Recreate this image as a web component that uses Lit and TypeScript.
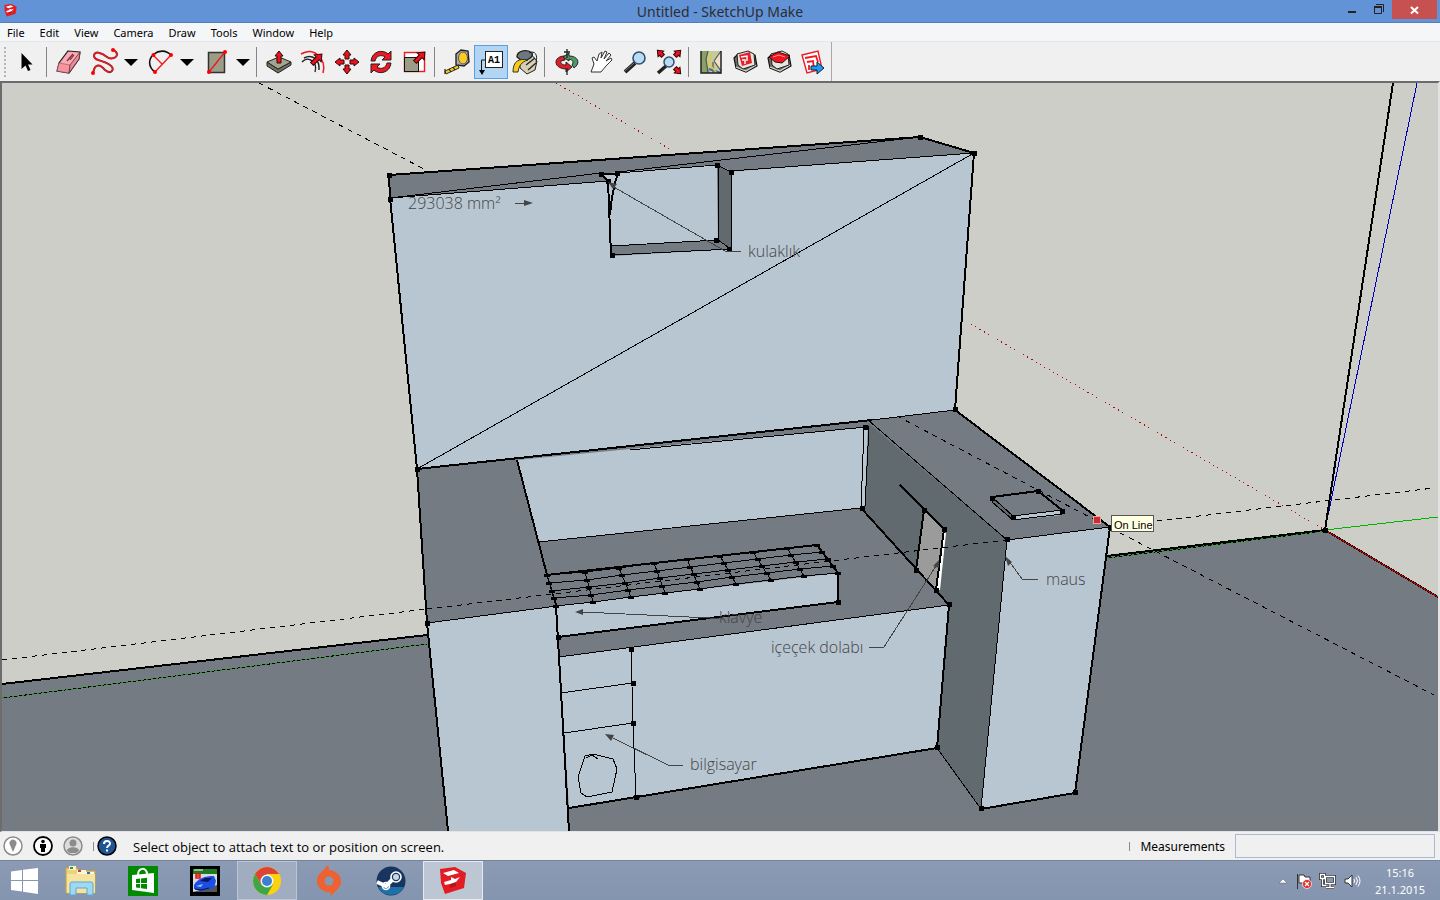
import { LitElement, html, svg, css } from "lit";
import { customElement, state } from "lit/decorators.js";

const menus = ["File", "Edit", "View", "Camera", "Draw", "Tools", "Window", "Help"];

const FACE = "#b8c6d2";
const TOP = "#747b82";
const SIDE = "#616a6f";

/* ---- toolbar glyphs, each on a 34 x 34 grid ---- */
const redArrow = (angle: number, x: number, y: number, len = 11, half = 5) => svg`
  <path transform="translate(${x} ${y}) rotate(${angle})" d="M0 ${-len}L${half} ${-len + half + 1}H2V0H-2V${-len + half + 1}H${-half}Z"
    fill="#f0101c" stroke="#2a0a0a" stroke-width="1"/>`;

const sheet = svg`
  <path d="M6 13L10 9L27 10L29 21L18 27L8 23Z" fill="#6d6e67" stroke="#111" stroke-width="1.200"/>
  <path d="M8 22L18 26L28 20" fill="none" stroke="#d8d8ce" stroke-width="1.200"/>
  <path d="M9 9L20 6L26 9L27 20L15 24L10 20Z" fill="#e8e6dc" stroke="#222"/>`;

const glyphs: Record<string, unknown> = {
  Select: svg`<path d="M11.500 8V24L15.500 20.500L18 26L20.500 25L18 19.500H22.500Z" fill="#000"/>`,
  Eraser: svg`
    <path d="M16 6L28 7L27 14L17 28L5 26L7 18Z" fill="#fbaab4" stroke="#222" stroke-width="1.200"/>
    <path d="M7 18L18 20L17 28L5 26Z" fill="#f9939f" stroke="#8a5560" stroke-width=".6"/>
    <path d="M18 20L28 7L27 14L17 28Z" fill="#e88c98" stroke="#633" stroke-width=".8"/>
    <path d="M15 16L21 9M18 15L22 10" stroke="#7a2b3c" stroke-width="1.200"/>`,
  Freehand: svg`
    <path d="M7 28C9 18 14 19 19 25C25 30 30 24 24 20C18 15 8 16 8 11C8 5 16 8 21 12C26 16 36 11 28 5" fill="none" stroke="#5a2a2c" stroke-width="2"/>
    <path d="M7 28C9 18 14 19 19 25C25 30 30 24 24 20C18 15 8 16 8 11C8 5 16 8 21 12C26 16 36 11 28 5" fill="none" stroke="#f01822" stroke-width="1.400"/>
    <circle cx="7" cy="28" r="2" fill="#f00"/><circle cx="27" cy="5" r="2" fill="#f00"/>`,
  Arc: svg`
    <path d="M13 27C6 22 6 14 12 9C17 5 24 5 29 10" fill="none" stroke="#111" stroke-width="1.600"/>
    <path d="M11 10L20 19M29 10L13 27" stroke="#f01822" stroke-width="1.400"/>
    <circle cx="11.500" cy="10" r="2" fill="#f00"/><circle cx="29" cy="10" r="2" fill="#f00"/><circle cx="13" cy="27" r="2" fill="#f00"/>`,
  Rectangle: svg`
    <rect x="10.500" y="7.500" width="16" height="20" fill="#9c9d87" stroke="#333" stroke-width="1.500"/>
    <path d="M11 27L27 7" stroke="#f01822" stroke-width="1.400"/>
    <circle cx="11" cy="27" r="2" fill="#f00"/><circle cx="27" cy="7" r="2" fill="#f00"/>`,
  "Push/Pull": svg`
    <path d="M5 17L16 24L29 17V20L16 28L5 21Z" fill="#6f705f" stroke="#222"/>
    <path d="M5 17L17 12L29 17L16 24Z" fill="#a5a58e" stroke="#222"/>
    ${redArrow(0, 17, 18, 12, 4)}`,
  Offset: svg`
    <path d="M5 9C18 1 31 14 27 28" fill="none" stroke="#f01822" stroke-width="1.600"/>
    <path d="M6 17C12 10 22 17 19 27M8 13C16 9 24 14 23 25" fill="none" stroke="#222" stroke-width="1.400"/>
    ${redArrow(45, 16, 19, 14)}`,
  Move: svg`${redArrow(0, 17, 14, 9, 4)}${redArrow(90, 20, 17, 9, 4)}${redArrow(180, 17, 20, 9, 4)}${redArrow(270, 14, 17, 9, 4)}`,
  Rotate: svg`
    <path d="M7 16C8 6 19 4 24 9L27 6V15H18L21 12C17 9 12 11 11 16Z" fill="#ee1722" stroke="#222"/>
    <path d="M27 18C26 28 15 30 10 25L7 28V19H16L13 22C17 25 22 23 23 18Z" fill="#ee1722" stroke="#222"/>`,
  Scale: svg`
    <rect x="6.500" y="7.500" width="20" height="19" fill="#fff" stroke="#f01822" stroke-width="1.400"/>
    <rect x="6.500" y="12.500" width="14" height="14" fill="#9c9d87" stroke="#111"/>
    ${redArrow(45, 17, 17, 14)}`,
  "Tape Measure": svg`
    <path d="M5 26L18 20L19 23L6 29Z" fill="#f6c720" stroke="#332"/>
    <path d="M16 9L21 5L28 6L29 17L24 21L16 20Z" fill="#a9aab0" stroke="#222" stroke-width="1.400"/>
    <ellipse cx="23" cy="13" rx="4.500" ry="6" fill="#f8cb27" stroke="#654"/>
    <path d="M5 24V29M9 24L11 27M13 22L15 25" stroke="#222" stroke-width="1.200"/>`,
  Text: svg`
    <rect x="11.500" y="6.500" width="17" height="16" fill="#fff" stroke="#222"/>
    <text class="glyph-text" x="14" y="18">A1</text>
    <path d="M11 15H7.500V27" fill="none" stroke="#111"/><path d="M5 25H11L8 30Z" fill="#000"/>`,
  "Paint Bucket": svg`
    <path d="M12 13L21 7L29 16L27 25L19 29L12 23Z" fill="#d7cfb2" stroke="#222"/>
    <path d="M9 12C9 5 20 4 24 8C26 12 18 17 13 15Z" fill="#6c7780" stroke="#222" stroke-width="1.400"/>
    <path d="M5 27C5 16 11 13 20 15C13 17 11 21 10 27Z" fill="#f8c81c" stroke="#332"/>
    <path d="M21 8C27 5 30 10 28 17" fill="none" stroke="#222"/>
    <path d="M18 20L27 13M20 25L28 18" stroke="#222" stroke-width="1.300"/>`,
  Orbit: svg`
    <path d="M15 11C9 11 6 14 6 17C6 22 12 24 16 24V27L22 22L16 17V20C12 20 10 18 11 16L15 15Z" fill="#df1c28" stroke="#222"/>
    <path d="M19 11V8L13 12L19 16V14C23 15 24 17 22 20L24 23C31 18 28 11 19 11Z" fill="#4d9a62" stroke="#222"/>
    <path d="M17 4V13M17 23V30M14 7H20" stroke="#222" stroke-width="1.300"/>`,
  Pan: svg`<path d="M7 27L10 19L8 13L10 12L13 16L15 9L18 7L17 13L21 6L23 7L20 14L25 8L27 10L22 16L27 13L28 15L22 21L17 27Z" fill="#fff" stroke="#333"/>`,
  Zoom: svg`
    <path d="M7 27L17 18" stroke="#222" stroke-width="4"/><path d="M7 26L16 18" stroke="#777" stroke-width="1"/>
    <circle cx="21" cy="13" r="6" fill="#b9dcf5" stroke="#344d70" stroke-width="1.600"/>`,
  "Zoom Extents": svg`
    <path d="M6 28L14 21" stroke="#222" stroke-width="3.500"/>
    <circle cx="17" cy="17" r="5" fill="#b9dcf5" stroke="#344d70" stroke-width="1.500"/>
    ${redArrow(-45, 11, 11, 8, 4)}${redArrow(45, 23, 11, 8, 4)}${redArrow(135, 23, 23, 8, 4)}`,
  "Add Location": svg`
    <rect x="7" y="6" width="20" height="22" fill="#c3cba2"/>
    <path d="M7 6H14L12 17L16 28H7Z" fill="#8ba067"/><path d="M20 16L27 6V25Z" fill="#efdfd0"/>
    <path d="M14 6L12 14L14 28M19 17V28M20 16L27 26M20 16L27 6" fill="none" stroke="#555b40" stroke-width="1.200"/>
    <path d="M15 24L27 28" stroke="#3a6bb0" stroke-width="2"/><path d="M18 7L15 19L22 27" fill="none" stroke="#e6c44e" stroke-width="1.500"/>
    <path d="M7 6V28H27V6" fill="none" stroke="#222" stroke-width="1.500"/>`,
  "3D Warehouse": svg`${sheet}
    <path d="M11 10L22 7L24 18L14 21Z" fill="#e3202b"/>
    <path d="M13 12L19 11V16M14 15L17 15V19" fill="none" stroke="#fff" stroke-width="1.400"/>`,
  "Share Model": svg`${sheet}
    <path d="M7 12L16 7L28 11L20 18L13 17Z" fill="#ee1520" stroke="#311"/><path d="M11 12L17 10L23 12" stroke="#ff8c8c" fill="none"/>`,
  LayOut: svg`
    <path d="M6 10L22 6L26 24L11 28Z" fill="#fff" stroke="#f01822" stroke-width="1.400"/>
    <path d="M9 13L20 11L22 17M11 17L17 16L18 24M13 20V25" fill="none" stroke="#f01822" stroke-width="1.800"/>
    <path d="M15 21H21V17L28 23L21 29V25H15Z" fill="#1d9bf5" stroke="#123"/>`,
};

const toolGroups: { name: string; drop?: boolean }[][] = [
  [{ name: "Select" }],
  [{ name: "Eraser" }, { name: "Freehand", drop: true }, { name: "Arc", drop: true }, { name: "Rectangle", drop: true }],
  ["Push/Pull", "Offset", "Move", "Rotate", "Scale"].map((name) => ({ name })),
  ["Tape Measure", "Text", "Paint Bucket"].map((name) => ({ name })),
  ["Orbit", "Pan", "Zoom", "Zoom Extents"].map((name) => ({ name })),
  ["Add Location", "3D Warehouse", "Share Model", "LayOut"].map((name) => ({ name })),
];

const logo = svg`
  <path d="M3 4L18 2L29 8L27 23L8 29L4 18Z" fill="#e31b23"/>
  <path d="M6 8L17 5L22 8L11 11ZM7 17L14 15V12L18 14L23 12L19 17V21L13 19L8 20Z" fill="#fff"/>
  <path d="M13 19L19 17V21L13 23Z" fill="#b5121b"/>`;

/* ---- taskbar pictures, each on a 32 x 32 grid ---- */
const apps: { name: string; look?: string; art: unknown }[] = [
  {
    name: "File Explorer",
    art: svg`
      <path d="M1 3H12L14 6H30V28H1Z" fill="#ecd27c" stroke="#c4a54c"/>
      <path d="M4 1H11V5H4Z" fill="#fbf3c8"/><path d="M5 2H8V4H5Z" fill="#22a33a"/>
      <path d="M12 5H21V9H12Z" fill="#fff7d0"/><path d="M13 5H16V7H13Z" fill="#d33"/><path d="M21 7H29V10H21Z" fill="#fff7d0"/><path d="M22 7H25V9H22Z" fill="#36c"/>
      <path d="M2 9H30V28H2Z" fill="#f6e39d"/>
      <path d="M5 30V19Q5 17 7 17H26Q28 17 28 19V30H22V23H11V30Z" fill="#9fd8f2" stroke="#5aa9d4"/>`,
  },
  {
    name: "Store",
    art: svg`
      <rect x="1" y="1" width="30" height="30" fill="#008a00"/>
      <path d="M5 10L27 8V28L5 25Z" fill="#fff"/><path d="M11 10C11 2 20 2 20 9" fill="none" stroke="#fff" stroke-width="2"/>
      <path d="M9 14L13 13.500V18H9ZM14 13.400L20 12.800V18H14ZM9 19H13V23L9 22.500ZM14 19H20V24L14 23.200Z" fill="#008a00"/>`,
  },
  {
    name: "Need for Speed",
    art: svg`
      <rect x="1" y="1" width="30" height="30"/><rect x="4" y="4" width="24" height="5" fill="#1d7c22"/>
      <rect x="4" y="9" width="24" height="18" fill="#d4dae0"/><path d="M4 27L28 20V27Z" fill="#555"/>
      <path d="M5 20C9 13 16 11 25 11L27 16L25 23L12 26L5 24Z" fill="#1c4ee6"/>
      <path d="M11 16L16 13L23 13L19 17Z" fill="#0a1760"/><path d="M7 21L14 19L12 22Z" fill="#9dbcff"/><path d="M6 24L12 25L20 23" stroke="#061038" fill="none"/>
      <path d="M5 5H14" stroke="#fff"/><path d="M7 9H11V13H7ZM7 11H11" fill="none" stroke="#e11" stroke-width="1.500"/>`,
  },
  {
    name: "Google Chrome",
    look: "open",
    art: svg`
      <circle cx="16" cy="16" r="14" fill="#fbd20b"/>
      <path d="M16 16L10 19.500L3.900 9A14 14 0 0 1 28.100 9H16Z" fill="#dd4433"/>
      <path d="M3.900 9A14 14 0 0 0 16 30L22 19.500L10 19.500Z" fill="#3fa648"/>
      <circle cx="16" cy="16" r="6.500" fill="#f3f6fa"/><circle cx="16" cy="16" r="5" fill="#3b7fd0"/>`,
  },
  {
    name: "Origin",
    art: svg`
      <path d="M16 5C21 5 28 9 28 16C28 23 23 25 18 31C17 29 17 28 18 27C11 28 4 23 4 16C4 8 10 7 15 0C16 2 16 4 16 5Z" fill="#ee6231"/>
      <circle cx="16" cy="16" r="4.500" fill="#8797b1"/>`,
  },
  {
    name: "Steam",
    art: svg`
      <circle cx="16" cy="16" r="14.500" fill="#17355f"/><path d="M3 22A14.500 14.500 0 0 0 29 22Z" fill="#1f6fa8"/>
      <path d="M2 17L11 21L18 14" fill="none" stroke="#fff" stroke-width="4"/>
      <circle cx="21" cy="12" r="5" fill="#17355f" stroke="#fff" stroke-width="1.600"/><circle cx="21" cy="12" r="3" fill="#c9d6e4"/>
      <circle cx="11" cy="21" r="3.500" fill="none" stroke="#fff" stroke-width="1.600"/>`,
  },
  { name: "SketchUp Make", look: "active", art: logo },
];

/* ---- keyboard grid on the desk ---- */
const backEdge = [[547, 575], [585, 572], [619, 568], [654, 563], [687, 559], [720, 556], [753, 552], [787, 548], [817, 545]];
const frontEdge = [[556, 606], [593, 602], [631, 597], [665, 593], [700, 589], [736, 584], [771, 580], [804, 576], [838, 573]];
const keyAt = (i: number, t: number) =>
  [0, 1].map((k) => Math.round(backEdge[i][k] + (frontEdge[i][k] - backEdge[i][k]) * t));
const rows = [0, 0.25, 0.5, 0.75, 1];
const keyLines = [
  ...backEdge.map((p, i) => `M${p}L${frontEdge[i]}`),
  ...rows.map((t) => "M" + backEdge.map((_, i) => keyAt(i, t).join()).join("L")),
].join("");
const keyDots = rows.flatMap((t) => backEdge.map((_, i) => keyAt(i, t)));

const corners = [
  [389, 175], [920, 137], [974, 153], [390, 199], [417, 469], [955, 409], [427, 623], [717, 165], [731, 172], [716, 240], [729, 249],
  [612, 255], [608, 181], [601, 174], [617, 173], [865, 427], [862, 508], [1110, 527], [1007, 539], [949, 604], [937, 747], [981, 808],
  [1075, 792], [924, 510], [944, 529], [936, 590], [916, 570], [992, 498], [1038, 491], [1062, 511], [1013, 517], [838, 602], [558, 637],
  [631, 649], [633, 683], [633, 723], [636, 797], [1325, 530],
];

const scene = svg`
  <path fill="${TOP}" d="M2 684L427 635L1107 555L1324 530L1440 598V831H2Z"/>
  <path class="axis" stroke="#0000b4" d="M1417 83L1325 530"/>
  <path class="axis" stroke="#c00000" stroke-dasharray="1 4" d="M556 83L1325 530"/>
  <path class="guide" d="M259 83L424 169M2 660L427 609M1107 527L1434 488"/>
  <path class="edge" d="M1393 83L1325 530M2 684L427 635M1107 556L1325 530L1438 597"/>
  <path class="line" d="M2 698L427 644M1107 558L1325 531"/>
  <path class="axis" stroke="#00a800" stroke-dasharray="2 3" d="M2 698L427 644M1107 558L1325 531"/>
  <path class="axis" stroke="#00b400" d="M1325 530L1438 517"/>
  <path class="axis" stroke="#c00000" d="M1325 530L1438 597"/>

  <path fill="${TOP}" d="M389 175L920 137L974 153L390 198Z"/>
  <path fill="${FACE}" d="M390 198L974 153L955 410L417 469Z"/>
  <path fill="${FACE}" d="M601 174L618 172L717 165L731 171L718 240L611 246L608 181Z"/>
  <path fill="${SIDE}" d="M717 165L731 172V249L718 240Z"/>
  <path fill="${TOP}" d="M611 246L718 240L731 249L612 256Z"/>
  <path class="line" d="M390 198L601 173M618 172L920 137M390 198L608 181M618 173L717 165M731 171L974 153L417 469M717 165L731 172M611 246L718 240V165M718 240L731 249M612 255L731 249V172"/>
  <path class="edge" d="M601 174H618M601 174L608 181L611 255M618 173Q612 190 610 215"/>

  <path fill="${TOP}" d="M417 469L872 420L955 410L1110 527L1007 540L949 605L559 657L557 606L427 623Z"/>
  <path fill="${FACE}" d="M517 460L630 449L866 427L861 508L539 542Z"/>
  <path fill="${SIDE}" d="M868 423L1007 540L981 809L937 748L949 605L861 508Z"/>
  <path fill="${FACE}" d="M864 428L868 426L865 505L861 508Z"/>
  <path fill="${FACE}" d="M556 606L838 573V602L558 637Z"/>
  <path fill="${FACE}" d="M559 657L949 605L937 748L569 808Z"/>
  <path fill="${FACE}" d="M427 623L557 606L569 831H448Z"/>
  <path fill="${FACE}" d="M1007 540L1110 527L1075 793L981 809Z"/>
  <path fill="#9b9b9b" d="M924 510L944 529L938 591L916 570Z"/>
  <path fill="#fff" d="M943 533H946L940 590H936Z"/>
  <path fill="${FACE}" d="M1013 516L1062 510V515L1013 520Z"/>
  <path fill="${SIDE}" d="M992 497L1013 516V520L992 502Z"/>

  <path class="edge" d="M390 198L389 175L920 137L974 153L955 410L1110 527L1075 793L981 809M937 748L569 808
    M390 198L417 469L427 623L448 831M417 469L872 420M517 460L547 575M838 573V602L558 637M556 606L559 657L569 831M861 508L949 605L937 748M547 575L817 545L838 573
    M900 485L944 529M924 510L916 570M944 529L936 590M992 497L1038 491L1062 510"/>
  <path class="line" d="M937 748L981 809M872 420L955 410M630 450L866 427M539 542L861 508M864 428L861 508M869 426L865 506M868 420L1007 540L981 809M1007 540L1110 527M427 623L557 606
    M547 575L557 606M559 657L949 605M992 497V502L1013 520L1062 514V510L1013 516L992 497M1013 516V520
    M631 648L633 723L636 797M561 693L632 683M564 733L633 723
    M585 756L593 754L613 759L617 769L612 792L587 797L581 793L578 777ZM586 758L592 755L598 759"/>
  <path class="line" d="${keyLines}"/>
  <path class="guide" d="M897 416L1097 521M1120 533L1434 695M427 609L1007 540"/>
  ${keyDots.map(([x, y]) => svg`<rect x="${x - 3}" y="${y - 1}" width="6" height="3"/>`)}
  ${corners.map(([x, y]) => svg`<rect x="${x - 2}" y="${y - 2}" width="5" height="5"/>`)}

  <path class="leader" d="M515 203H526M612 186L725 251H741M1009 561L1022 579H1038M583 612L710 618H719M869 647H884L936 566M613 738L668 765H683"/>
  <path fill="#444" d="M533 203L524 200V206ZM608 182L617 184L613 189ZM1005 556L1012 562L1008 566ZM575 612L583 609V615ZM939 560L939 568L933 566ZM605 734L614 735L611 741Z"/>
  <g class="label">
    <text x="408" y="209">293038 mm²</text>
    <text x="748" y="257">kulaklık</text>
    <text x="1046" y="585">maus</text>
    <text x="719" y="623">klavye</text>
    <text x="771" y="653">içeçek dolabı</text>
    <text x="690" y="770">bilgisayar</text>
  </g>
  <rect x="1093.500" y="516.500" width="7" height="7" fill="#cf2a2f" stroke="#e9a3a3"/>
  <rect x="1111.500" y="515.500" width="42" height="16" fill="#ffffe1" stroke="#555"/>
  <text class="tip" x="1114" y="529">On Line</text>`;

@customElement("app-root")
export class AppRoot extends LitElement {
  @state() private tool = "Text";

  static styles = css`
    :host { display: flex; flex-direction: column; height: 100vh; overflow: hidden; background: #f0f0f0; color: #000; font: 12px/16px "Noto Sans", sans-serif; }
    button { display: flex; align-items: center; justify-content: center; margin: 0; padding: 0; border: 0; background: none; color: inherit; font: inherit; }
    svg { display: block; flex: none; }

    .title { display: grid; grid-template-columns: 1fr auto 1fr; height: 22px; border-bottom: 1px solid #4f7fbf; background: #6293d6; color: #2d2d30; }
    .title h1 { margin: 0; font-size: 14px; line-height: 23px; font-weight: 400; }
    .app-icon { padding: 3px; }
    .window-buttons { display: flex; justify-content: flex-end; align-items: flex-start; padding-right: 3px; }
    .window-buttons button { width: 26px; height: 19px; }
    .window-buttons .close { width: 45px; background: #c75050; }

    .menus { display: flex; gap: 1px; height: 18px; border-bottom: 1px solid #e4e6ea; background: #f5f6f8; }
    .menus button { padding: 1px 7px 0; line-height: 18px; font-size: 11px; }

    .tools { display: flex; align-self: flex-start; height: 34px; padding: 3px 1px 2px 0; border-right: 1px solid #a8a8a8; }
    .grip { width: 2px; margin: 2px 4px; background: repeating-linear-gradient(#b5b5b5 0 2px, #f0f0f0 2px 4px); }
    .group { display: flex; }
    .group + .group::before { content: ""; width: 1px; margin: 2px 5px 2px 2px; background: #858585; }
    .tools button { width: 34px; height: 34px; }
    .tools .drop { width: 22px; }
    .tools .on { background: #b3d5f4; box-shadow: inset 0 0 0 1px #5b9fe6; }
    .glyph-text { font: bold 10px "Liberation Mono", monospace; }

    .view { flex: 1; min-height: 0; border: solid; border-width: 2px 2px 1px; border-color: #6c6c6c #e3e3e3 #e3e3e3 #6c6c6c; background: #cdcec8; }
    .view svg { width: 100%; height: 100%; }
    .edge, .line, .axis, .guide, .leader { fill: none; shape-rendering: crispEdges; stroke-width: 1px; }
    .edge, .line, .guide { stroke: #000; }
    .edge { stroke-width: 2px; }
    .guide { stroke-dasharray: 5 5; }
    .leader { stroke: #444; }
    .label { fill: #444; font: 300 16px "Open Sans", sans-serif; }
    .tip { font: 11px "Liberation Sans", sans-serif; }

    .status { display: flex; align-items: center; height: 28px; padding: 0 5px 0 3px; }
    .status button { width: 20px; margin-right: 10px; }
    .rule { width: 1px; height: 9px; background: #8a8a8a; }
    .status .help { margin: 0 16px 0 3px; }
    .hint { flex: 1; padding-top: 2px; font: 13px/16px "Open Sans", sans-serif; }
    .status label { margin: 0 10px; padding-top: 2px; }
    .status input { box-sizing: border-box; width: 200px; height: 24px; border: 1px solid #abbad4; background: #f0f0f0; font: inherit; }

    .taskbar { display: flex; height: 39px; border-top: 1px solid #75849c; background: linear-gradient(#8c9ab3, #8495b0); color: #fff; }
    .start { width: 51px; }
    .taskbar .start { justify-content: flex-start; padding-left: 10px; }
    .apps { display: flex; flex: 1; gap: 2px; }
    .apps button { box-sizing: border-box; width: 60px; height: 39px; border: 1px solid transparent; }
    .apps .open { background: #a0acbf; border-color: #bcc5d4; }
    .apps .active { background: #bdc6d3; border-color: #e6eaf0; }
    .tray { display: flex; align-items: center; gap: 6px; padding-right: 15px; }
    .tray time { margin-left: 8px; font-size: 11px; line-height: 17px; text-align: center; }
  `;

  private icon(name: string) {
    return html`<button class=${this.tool === name ? "on" : ""} aria-label=${name} aria-pressed=${this.tool === name}
      @click=${() => (this.tool = name)}><svg width="34" height="34" viewBox="0 0 34 34">${glyphs[name]}</svg></button>`;
  }

  render() {
    return html`
      <header class="title">
        <svg class="app-icon" width="15" height="15" viewBox="0 0 32 32">${logo}</svg>
        <h1>Untitled - SketchUp Make</h1>
        <div class="window-buttons">
          <button aria-label="Minimize"><svg width="10" height="14"><rect x="0" y="8" width="8" height="2" fill="#222"/></svg></button>
          <button aria-label="Restore"><svg width="10" height="14" fill="none" stroke="#222"><path d="M2 1.500H9.500V9M.500 4H7.500V10.500H.500Z"/><path d="M0 4H8" stroke-width="2"/></svg></button>
          <button class="close" aria-label="Close"><svg width="9" height="8"><path d="M1 1L8 7.500M8 1L1 7.500" stroke="#fff" stroke-width="2"/></svg></button>
        </div>
      </header>
      <nav class="menus">${menus.map((m) => html`<button>${m}</button>`)}</nav>
      <div class="tools" role="toolbar">
        <span class="grip"></span>
        ${toolGroups.map((g) => html`<div class="group">${g.map((t) => html`${this.icon(t.name)}${t.drop
          ? html`<button class="drop" aria-label="${t.name} options"><svg width="14" height="8"><path d="M0 1H14L7 8Z"/></svg></button>`
          : ""}`)}</div>`)}
      </div>
      <main class="view"><svg viewBox="2 83 1436 748" preserveAspectRatio="xMidYMid slice">${scene}</svg></main>
      <footer class="status">
        <button aria-label="Geo-location"><svg width="20" height="20"><circle cx="10" cy="10" r="9" fill="#fff" stroke="#8c8c8c" stroke-width="1.500"/><path d="M10 16L7 9A3.500 3.500 0 1 1 13 9Z" fill="#8c8c8c"/></svg></button>
        <button aria-label="Credits"><svg width="20" height="20"><circle cx="10" cy="10" r="9" fill="#fff" stroke="#000" stroke-width="1.800"/><circle cx="10" cy="5.500" r="1.800"/><path d="M7 8H13V12H12V16H8V12H7Z"/></svg></button>
        <button aria-label="Sign in"><svg width="20" height="20"><circle cx="10" cy="10" r="9" fill="#ddd" stroke="#8c8c8c" stroke-width="1.500"/><circle cx="10" cy="7" r="3.500" fill="#8c8c8c"/><path d="M4 15C4 10 16 10 16 15L13 17H7Z" fill="#8c8c8c"/></svg></button>
        <span class="rule"></span>
        <button class="help" aria-label="Help"><svg width="20" height="20"><circle cx="10" cy="10" r="9" fill="#1f5596" stroke="#000" stroke-width="1.500"/><path d="M7 8C7 4 13 4 13 7.500C13 9.500 10 10 10 12" fill="none" stroke="#fff" stroke-width="2"/><rect x="9" y="13.500" width="2" height="2" fill="#fff"/></svg></button>
        <span class="hint">Select object to attach text to or position on screen.</span>
        <span class="rule"></span>
        <label for="measure">Measurements</label>
        <input id="measure" type="text">
      </footer>
      <div class="taskbar">
        <button class="start" aria-label="Start"><svg width="28" height="28" fill="#fff"><path d="M1 4.500L12 3V13H1ZM13 2.800L28 1V13H13ZM1 14H12V24.500L1 23ZM13 14H28V27L13 24.700Z"/></svg></button>
        <div class="apps">${apps.map((a) => html`<button class=${a.look ?? ""} aria-label=${a.name}><svg width="32" height="32" viewBox="0 0 32 32">${a.art}</svg></button>`)}</div>
        <div class="tray">
          <svg width="12" height="6"><path d="M2 5L6 1L10 5Z" fill="#fff" stroke="#56617a" stroke-width=".5"/></svg>
          <svg width="18" height="18"><path d="M2.500 2V17M4 3H9L10 5H15V11H4Z" fill="#fff" stroke="#333"/><circle cx="12" cy="12" r="4.500" fill="#e02b2b" stroke="#fff" stroke-width=".7"/><path d="M10 10L14 14M14 10L10 14" stroke="#fff" stroke-width="1.400"/></svg>
          <svg width="18" height="18"><path d="M6.500 4.500H15.500V11.500H6.500ZM11 12V15M7 15.500H15M1.500 2.500H5.500V6.500H1.500ZM3.500 7V13.500H7" fill="none" stroke="#333" stroke-width="3"/><path d="M6.500 4.500H15.500V11.500H6.500ZM11 12V15M7 15.500H15M1.500 2.500H5.500V6.500H1.500ZM3.500 7V13.500H7" fill="none" stroke="#fff" stroke-width="1.300"/></svg>
          <svg width="18" height="18"><path d="M2 7H5L9 3V15L5 11H2Z" fill="#fff" stroke="#333"/><path d="M11 7Q12.500 9 11 11M13 5Q16 9 13 13M15 3.500Q19 9 15 14.500" fill="none" stroke="#fff"/></svg>
          <time datetime="2015-01-21T15:16">15:16<br>21.1.2015</time>
        </div>
      </div>`;
  }
}
